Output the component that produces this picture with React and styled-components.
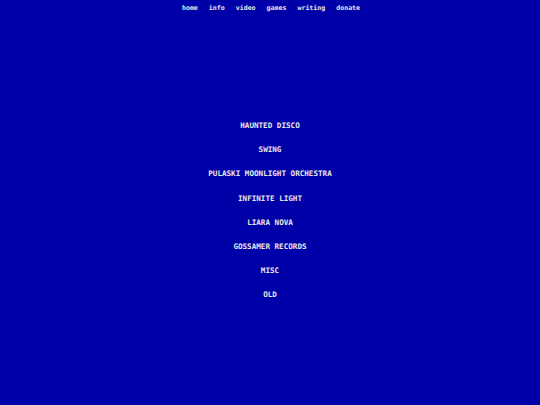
import React from "react";
import styled, { createGlobalStyle } from "styled-components";

const GlobalStyle = createGlobalStyle`
  html, body {
    margin: 0;
    padding: 0;
    background: #0000a8;
  }
  body {
    font-family: "DejaVu Sans Mono", "Liberation Mono", monospace;
    color: #e8e8e8;
  }
`;

const navLinks = ["home", "info", "video", "games", "writing", "donate"];
const projects = [
  "HAUNTED DISCO",
  "SWING",
  "PULASKI MOONLIGHT ORCHESTRA",
  "INFINITE LIGHT",
  "LIARA NOVA",
  "GOSSAMER RECORDS",
  "MISC",
  "OLD",
];

export default function App() {
  return (
    <Page>
      <GlobalStyle />
      <Nav>
        {navLinks.map((item) => (
          <NavLink key={item} href="#">{item}</NavLink>
        ))}
      </Nav>
      <List>
        {projects.map((item) => (
          <Project key={item} href="#">{item}</Project>
        ))}
      </List>
    </Page>
  );
}

const Page = styled.div`
  width: 540px;
  height: 405px;
  background: #0000a8;
  display: flex;
  flex-direction: column;
  align-items: center;
  overflow: hidden;
`;

const Nav = styled.nav`
  display: flex;
  justify-content: center;
  gap: 11px;
  padding-top: 4px;
  margin-left: 2px;
`;

const NavLink = styled.a`
  color: #e8e8e8;
  text-decoration: none;
  font-weight: bold;
  font-size: 6.6px;
  line-height: 8px;
`;

const List = styled.div`
  display: flex;
  flex-direction: column;
  align-items: center;
  gap: 14.2px;
  margin-top: 109px;
`;

const Project = styled.a`
  color: #e8e8e8;
  text-decoration: none;
  font-weight: bold;
  font-size: 7.6px;
  line-height: 10px;
`;
